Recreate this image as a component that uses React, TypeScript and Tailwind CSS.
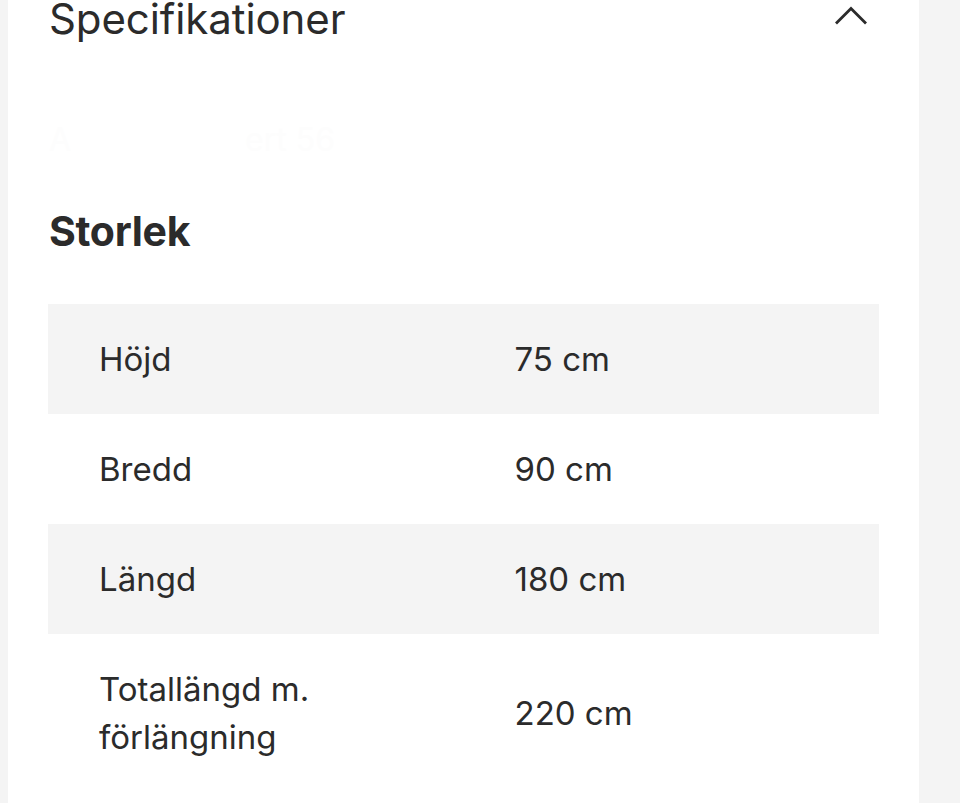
import React from 'react';

interface SpecRow {
  label: React.ReactNode;
  value: string;
}

const rows: SpecRow[] = [
  { label: 'Höjd', value: '75 cm' },
  { label: 'Bredd', value: '90 cm' },
  { label: 'Längd', value: '180 cm' },
  {
    label: (
      <>
        Totallängd m.
        <br />
        förlängning
      </>
    ),
    value: '220 cm',
  },
];

const ChevronUp: React.FC = () => (
  <svg width="34" height="20" viewBox="0 0 34 20" fill="none" className="block">
    <path d="M2 17.5 L17 2.5 L32 17.5" stroke="#2b2b2b" strokeWidth="2.8" />
  </svg>
);

export default function App() {
  return (
    <div
      className="h-[803px] w-[960px] bg-[#f4f4f4] pl-2 overflow-hidden"
      style={{ fontFamily: 'Inter, "Noto Sans", sans-serif' }}
    >
      <div className="flex flex-col w-[911px] h-[803px] bg-white pl-[40px] pr-[40px] text-[#2b2b2b]">
        <div className="flex items-start justify-between h-[52px] -mt-[7px]">
          <h2 className="ml-px text-[42px] leading-[52px] font-normal tracking-[-0.1px]">Specifikationer</h2>
          <div className="pt-[13px] pr-[11px]">
            <ChevronUp />
          </div>
        </div>

        {/* faded line, barely visible */}
        <div className="h-[160px] flex items-center text-[32px] text-[#fdfdfd] pt-[30px] pl-px">
          <span className="w-[196px]">A</span>
          <span>ert 56</span>
        </div>

        <h3 className="ml-px text-[41px] leading-[52px] font-bold tracking-[-0.3px]">Storlek</h3>

        <div className="mt-[47px] w-[831px]">
          {rows.map((row, i) => (
            <div
              key={i}
              className={`grid grid-cols-2 items-center text-[33px] leading-[48px] py-[31px] ${
                i % 2 === 0 ? 'bg-[#f4f4f4]' : 'bg-white'
              }`}
            >
              <div className="pl-[51px]">{row.label}</div>
              <div className="pl-[51px]">{row.value}</div>
            </div>
          ))}
        </div>
      </div>
    </div>
  );
}
